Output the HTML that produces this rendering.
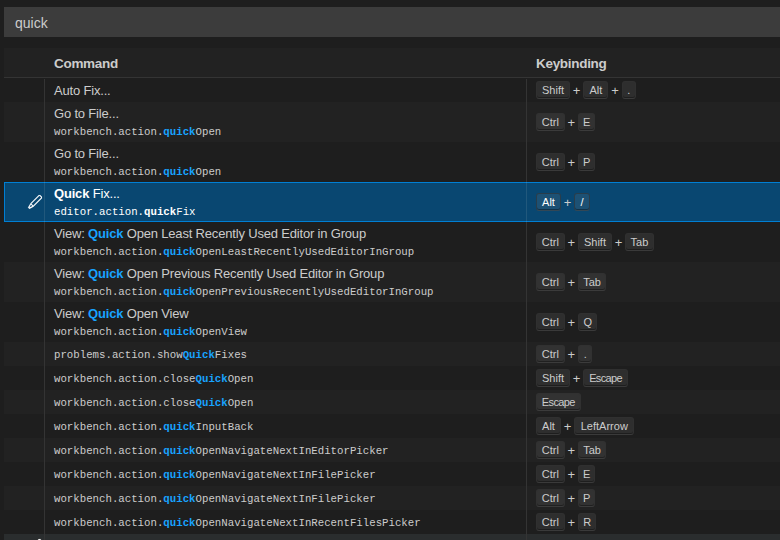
<!DOCTYPE html>
<html><head><meta charset="utf-8"><style>
html,body{margin:0;padding:0;width:780px;height:540px;overflow:hidden;background:#1e1e1e;}
body{position:relative;font-family:"Liberation Sans",sans-serif;color:#cccccc;}
.input{position:absolute;left:4px;top:7px;width:800px;height:30px;background:#3c3c3c;}
.input span{position:absolute;left:11px;top:8px;font-size:14px;line-height:16px;color:#cccccc;}
.hdr{position:absolute;left:4px;top:48px;width:800px;height:29px;background:#222222;border-bottom:1px solid #343434;}
.hdr span{position:absolute;top:8px;font-size:13.5px;letter-spacing:-0.3px;line-height:16px;font-weight:bold;color:#cccccc;}
.row{position:absolute;left:4px;width:800px;box-sizing:border-box;}
.row.odd{background:#222222;}
.row.sel{background:#094771;outline:1px solid #007fd4;outline-offset:-1px;color:#fff;}
.row.hover{background:#2a2d2e;}
.vl1,.vl2{position:absolute;top:0;bottom:0;width:1px;background:#343434;}
.vl1{left:40px;} .vl2{left:522px;}
.sel .vl1,.sel .vl2{background:rgba(204,204,204,0.125);}
.t1,.t2{position:absolute;left:50px;font-size:13px;line-height:16px;white-space:nowrap;letter-spacing:-0.18px;}
.t1{top:5px;} .t2{top:4px;}
.id1,.id2{position:absolute;left:50px;font-family:"Liberation Mono",monospace;font-size:10.72px;line-height:14px;white-space:nowrap;}
.id1{top:6px;} .id2{top:23px;}
b.h{color:#18a3ff;font-weight:bold;}
.sel b.h{color:#fff;}
.keys{position:absolute;left:532px;top:50%;transform:translateY(-50%);height:18px;display:flex;align-items:center;white-space:nowrap;}
.kc{display:inline-block;box-sizing:border-box;height:18px;padding:0;text-align:center;font-size:11px;line-height:16px;background:rgba(128,128,128,0.17);border:1px solid rgba(51,51,51,0.6);border-bottom-color:rgba(68,68,68,0.6);box-shadow:inset 0 -1px 0 rgba(0,0,0,0.36);border-radius:3px;color:#cccccc;}
.sel .kc{color:#fff;}
.plus{display:inline-block;font-size:13px;width:13.3px;text-align:center;}
.sel .plus{color:#cccccc;}
.pen{position:absolute;left:23px;top:50%;margin-top:-8px;color:#fff;}
</style></head><body>
<div class="input"><span>quick</span></div>
<div class="hdr"><span style="left:50px">Command</span><span style="left:532px">Keybinding</span></div>
<div class="row" style="top:78px;height:24px"><div class="t1">Auto Fix...</div><div class="keys"><span class="kc" style="width:34px">Shift</span><span class="plus">+</span><span class="kc" style="width:25px">Alt</span><span class="plus">+</span><span class="kc" style="width:14.5px">.</span></div><div class="vl1" style="top:1px"></div><div class="vl2" style="top:1px"></div></div><div class="row odd" style="top:102px;height:40px"><div class="t2">Go to File...</div><div class="id2">workbench.action.<b class=h>quick</b>Open</div><div class="keys"><span class="kc" style="width:28.7px">Ctrl</span><span class="plus">+</span><span class="kc" style="width:17.5px">E</span></div><div class="vl1"></div><div class="vl2"></div></div><div class="row" style="top:142px;height:40px"><div class="t2">Go to File...</div><div class="id2">workbench.action.<b class=h>quick</b>Open</div><div class="keys"><span class="kc" style="width:28.7px">Ctrl</span><span class="plus">+</span><span class="kc" style="width:17.5px">P</span></div><div class="vl1"></div><div class="vl2"></div></div><div class="row odd sel" style="top:182px;height:40px"><svg class="pen" width="16" height="16" viewBox="0 0 16 16"><path d="M13.23 1h-1.46L3.52 9.25l-.16.22L1 13.59 2.41 15l4.12-2.36.22-.16L15 4.23V2.77L13.23 1zM2.41 13.59l1.51-3 1.45 1.45-2.96 1.55zm3.83-2.06L4.47 9.76l8-8 1.77 1.77-8 8z" fill="currentColor" stroke="currentColor" stroke-width="0.12"/></svg><div class="t2"><b class=h>Quick</b> Fix...</div><div class="id2">editor.action.<b class=h>quick</b>Fix</div><div class="keys"><span class="kc" style="width:25px">Alt</span><span class="plus">+</span><span class="kc" style="width:15.7px">/</span></div><div class="vl1"></div><div class="vl2"></div></div><div class="row" style="top:222px;height:40px"><div class="t2">View: <b class=h>Quick</b> Open Least Recently Used Editor in Group</div><div class="id2">workbench.action.<b class=h>quick</b>OpenLeastRecentlyUsedEditorInGroup</div><div class="keys"><span class="kc" style="width:28.7px">Ctrl</span><span class="plus">+</span><span class="kc" style="width:34px">Shift</span><span class="plus">+</span><span class="kc" style="width:28.3px">Tab</span></div><div class="vl1"></div><div class="vl2"></div></div><div class="row odd" style="top:262px;height:40px"><div class="t2">View: <b class=h>Quick</b> Open Previous Recently Used Editor in Group</div><div class="id2">workbench.action.<b class=h>quick</b>OpenPreviousRecentlyUsedEditorInGroup</div><div class="keys"><span class="kc" style="width:28.7px">Ctrl</span><span class="plus">+</span><span class="kc" style="width:28.3px">Tab</span></div><div class="vl1"></div><div class="vl2"></div></div><div class="row" style="top:302px;height:40px"><div class="t2">View: <b class=h>Quick</b> Open View</div><div class="id2">workbench.action.<b class=h>quick</b>OpenView</div><div class="keys"><span class="kc" style="width:28.7px">Ctrl</span><span class="plus">+</span><span class="kc" style="width:19.4px">Q</span></div><div class="vl1"></div><div class="vl2"></div></div><div class="row odd" style="top:342px;height:24px"><div class="id1">problems.action.show<b class=h>Quick</b>Fixes</div><div class="keys"><span class="kc" style="width:28.7px">Ctrl</span><span class="plus">+</span><span class="kc" style="width:14.5px">.</span></div><div class="vl1"></div><div class="vl2"></div></div><div class="row" style="top:366px;height:24px"><div class="id1">workbench.action.close<b class=h>Quick</b>Open</div><div class="keys"><span class="kc" style="width:34px">Shift</span><span class="plus">+</span><span class="kc" style="width:44.5px;letter-spacing:-0.65px">Escape</span></div><div class="vl1"></div><div class="vl2"></div></div><div class="row odd" style="top:390px;height:24px"><div class="id1">workbench.action.close<b class=h>Quick</b>Open</div><div class="keys"><span class="kc" style="width:44.5px;letter-spacing:-0.65px">Escape</span></div><div class="vl1"></div><div class="vl2"></div></div><div class="row" style="top:414px;height:24px"><div class="id1">workbench.action.<b class=h>quick</b>InputBack</div><div class="keys"><span class="kc" style="width:25px">Alt</span><span class="plus">+</span><span class="kc" style="width:60px">LeftArrow</span></div><div class="vl1"></div><div class="vl2"></div></div><div class="row odd" style="top:438px;height:24px"><div class="id1">workbench.action.<b class=h>quick</b>OpenNavigateNextInEditorPicker</div><div class="keys"><span class="kc" style="width:28.7px">Ctrl</span><span class="plus">+</span><span class="kc" style="width:28.3px">Tab</span></div><div class="vl1"></div><div class="vl2"></div></div><div class="row" style="top:462px;height:24px"><div class="id1">workbench.action.<b class=h>quick</b>OpenNavigateNextInFilePicker</div><div class="keys"><span class="kc" style="width:28.7px">Ctrl</span><span class="plus">+</span><span class="kc" style="width:17.5px">E</span></div><div class="vl1"></div><div class="vl2"></div></div><div class="row odd" style="top:486px;height:24px"><div class="id1">workbench.action.<b class=h>quick</b>OpenNavigateNextInFilePicker</div><div class="keys"><span class="kc" style="width:28.7px">Ctrl</span><span class="plus">+</span><span class="kc" style="width:17.5px">P</span></div><div class="vl1"></div><div class="vl2"></div></div><div class="row" style="top:510px;height:24px"><div class="id1">workbench.action.<b class=h>quick</b>OpenNavigateNextInRecentFilesPicker</div><div class="keys"><span class="kc" style="width:28.7px">Ctrl</span><span class="plus">+</span><span class="kc" style="width:18.4px">R</span></div><div class="vl1"></div><div class="vl2"></div></div><div class="row odd hover" style="top:534px;height:24px"><svg class="pen" width="16" height="16" viewBox="0 0 16 16"><path d="M13.23 1h-1.46L3.52 9.25l-.16.22L1 13.59 2.41 15l4.12-2.36.22-.16L15 4.23V2.77L13.23 1zM2.41 13.59l1.51-3 1.45 1.45-2.96 1.55zm3.83-2.06L4.47 9.76l8-8 1.77 1.77-8 8z" fill="currentColor" stroke="currentColor" stroke-width="0.12"/></svg><div class="vl1"></div><div class="vl2"></div></div>
</body></html>
